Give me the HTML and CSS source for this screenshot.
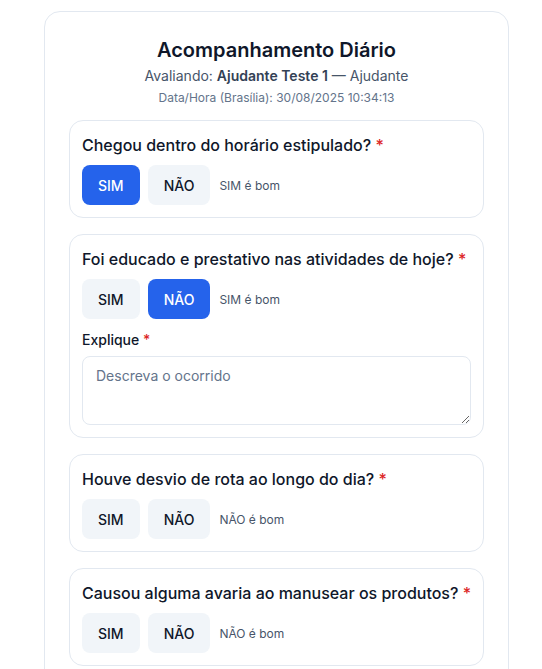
FILE: index.html
```html
<!DOCTYPE html>
<html lang="pt-BR">
<head>
<meta charset="utf-8">
<title>Acompanhamento Diário</title>
<link rel="stylesheet" href="styles.css">
</head>
<body>
<main class="panel">
  <header class="head">
    <h1 class="title">Acompanhamento Diário</h1>
    <p class="sub">Avaliando: <strong>Ajudante Teste 1</strong> — Ajudante</p>
    <p class="date">Data/Hora (Brasília): 30/08/2025 10:34:13</p>
  </header>

  <section class="q">
    <h2 class="q-title">Chegou dentro do horário estipulado? <span class="req">*</span></h2>
    <div class="opts">
      <button class="opt on">SIM</button>
      <button class="opt">NÃO</button>
      <span class="hint">SIM é bom</span>
    </div>
  </section>

  <section class="q">
    <h2 class="q-title">Foi educado e prestativo nas atividades de hoje? <span class="req">*</span></h2>
    <div class="opts">
      <button class="opt">SIM</button>
      <button class="opt on">NÃO</button>
      <span class="hint">SIM é bom</span>
    </div>
    <label class="lbl">Explique <span class="req">*</span></label>
    <textarea class="txt" placeholder="Descreva o ocorrido"></textarea>
  </section>

  <section class="q">
    <h2 class="q-title">Houve desvio de rota ao longo do dia? <span class="req">*</span></h2>
    <div class="opts">
      <button class="opt">SIM</button>
      <button class="opt">NÃO</button>
      <span class="hint">NÃO é bom</span>
    </div>
  </section>

  <section class="q">
    <h2 class="q-title">Causou alguma avaria ao manusear os produtos? <span class="req">*</span></h2>
    <div class="opts">
      <button class="opt">SIM</button>
      <button class="opt">NÃO</button>
      <span class="hint">NÃO é bom</span>
    </div>
  </section>
</main>
</body>
</html>
```
FILE: styles.css
```css
* { box-sizing: border-box; }
html, body { margin: 0; padding: 0; background: #fff; }
body {
  font-family: Inter, "Noto Sans", "Liberation Sans", sans-serif;
  color: #0f172a;
  padding: 11px 0 0 44px;
}
.panel {
  width: 465px;
  border: 1px solid #e2e8f0;
  border-radius: 16px;
  padding: 24px 24px 24px;
  display: flex;
  flex-direction: column;
  gap: 16px;
  min-height: 700px;
}
.head {
  text-align: center;
  margin-bottom: -2px;
}
.title {
  margin: 0;
  font-size: 20px;
  line-height: 28px;
  font-weight: 600;
  color: #0f172a;
}
.sub {
  margin: 2px 0 0;
  font-size: 14px;
  line-height: 20px;
  color: #475569;
}
.sub strong { font-weight: 600; color: #334155; }
.date {
  margin: 4px 0 0;
  font-size: 12px;
  line-height: 16px;
  color: #64748b;
}
.q {
  border: 1px solid #e2e8f0;
  border-radius: 14px;
  padding: 12px;
  display: flex;
  flex-direction: column;
}
.q-title {
  margin: 0;
  font-size: 16px;
  line-height: 24px;
  font-weight: 500;
  color: #0f172a;
}
.req { color: #dc2626; }
.opts {
  margin-top: 8px;
  display: flex;
  align-items: center;
  gap: 8px;
}
.opt {
  font-family: inherit;
  height: 40px;
  padding: 0 16px;
  border: 0;
  border-radius: 8px;
  background: #f1f5f9;
  color: #0f172a;
  font-size: 14px;
  font-weight: 500;
}
.opt.on { background: #2563eb; color: #fff; }
.hint {
  margin-left: 1px;
  font-size: 12px;
  color: #475569;
}
.lbl {
  margin-top: 11px;
  font-size: 14px;
  line-height: 20px;
  font-weight: 500;
  color: #0f172a;
}
.txt {
  margin-top: 6px;
  height: 69px;
  width: 100%;
  border: 1px solid #e2e8f0;
  border-radius: 8px;
  padding: 9px 13px;
  font-family: inherit;
  font-size: 14px;
  line-height: 20px;
  color: #0f172a;
}
.txt::placeholder { color: #64748b; }
```
